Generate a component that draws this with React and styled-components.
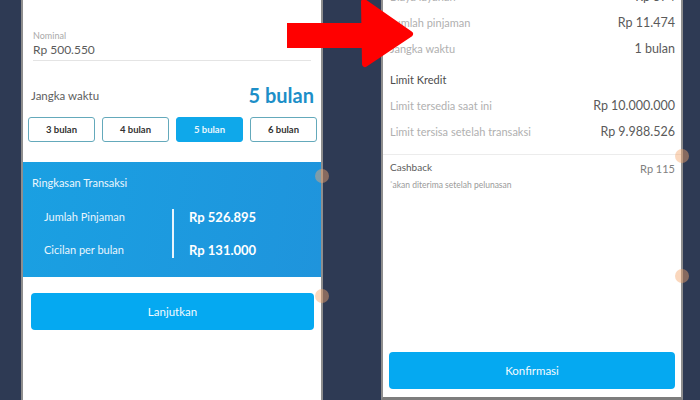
import React from "react";
import styled, { createGlobalStyle } from "styled-components";

const GlobalStyle = createGlobalStyle`
  html, body {
    margin: 0;
    padding: 0;
    background: #2e3a54;
    font-family: "Lato", "Noto Sans", sans-serif;
  }
`;

const Page = styled.div`
  position: relative;
  width: 700px;
  height: 400px;
  overflow: hidden;
  display: flex;
  align-items: flex-start;
  padding-left: 21px;
  gap: 58px;
  box-sizing: border-box;
  background: #2e3a54;
`;

const Phone = styled.div`
  position: relative;
  width: 298px;
  height: ${p => p.h}px;
  background: #ffffff;
  border-left: 2px solid #8e8e8e;
  border-right: 2px solid #8e8e8e;
  border-bottom: ${p => (p.bottomEdge ? "3px solid #7d7d7d" : "none")};
  display: flex;
  flex-direction: column;
  flex-shrink: 0;
`;

const Bubble = styled.div`
  position: absolute;
  right: -8px;
  top: ${p => p.top}px;
  width: 14px;
  height: 14px;
  border-radius: 50%;
  background: #f3a66d;
  opacity: 0.45;
`;

/* left phone */

const Field = styled.div`
  margin: 30px 10px 0 10px;
  border-bottom: 1px solid #e4e4e4;
  padding-bottom: 2px;
  position: relative;
`;

const FieldLabel = styled.div`
  font-size: 9px;
  line-height: 12px;
  color: #a9a9a9;
`;

const FieldValue = styled.div`
  font-size: 12px;
  line-height: 16px;
  color: #5b5b5b;
`;

const TermRow = styled.div`
  margin: 22px 7px 0 8px;
  display: flex;
  align-items: center;
  justify-content: space-between;
  height: 24px;
`;

const TermLabel = styled.span`
  font-size: 11.5px;
  color: #5e5e5e;
`;

const TermValue = styled.span`
  font-size: 20px;
  font-weight: 700;
  color: #1d8fc8;
`;

const Chips = styled.div`
  margin: 10px 4px 0 5px;
  display: grid;
  grid-template-columns: repeat(4, 1fr);
  gap: 7px;
`;

const Chip = styled.div`
  height: 25px;
  box-sizing: border-box;
  border-radius: 3px;
  border: 1px solid ${p => (p.active ? "#0fa8ea" : "#64a9bb")};
  background: ${p => (p.active ? "#0fa8ea" : "#ffffff")};
  color: ${p => (p.active ? "#e8f6fd" : "#333333")};
  font-size: 9.5px;
  font-weight: 700;
  display: flex;
  align-items: center;
  justify-content: center;
`;

const Summary = styled.div`
  margin-top: 20px;
  height: 115px;
  box-sizing: border-box;
  background: linear-gradient(100deg, #1aa0e2 0%, #1f94dc 100%);
  padding: 14px 0 0 9px;
  color: #ffffff;
`;

const SummaryTitle = styled.div`
  font-size: 11px;
  line-height: 14px;
  color: #eaf6fd;
`;

const SummaryGrid = styled.div`
  margin-top: 19px;
  margin-left: 12px;
  display: grid;
  grid-template-columns: 128px 1fr;
`;

const SummaryLabels = styled.div`
  display: flex;
  flex-direction: column;
  gap: 17px;
  font-size: 11px;
  line-height: 16px;
  color: #e9f5fd;
`;

const SummaryValues = styled.div`
  border-left: 2px solid #e8f4fc;
  padding-left: 15px;
  display: flex;
  flex-direction: column;
  gap: 17px;
  font-size: 13px;
  line-height: 16px;
  font-weight: 700;
`;

const PrimaryButton = styled.div`
  margin: ${p => p.m};
  height: 37px;
  border-radius: 4px;
  background: #05a9f1;
  color: #f4fbff;
  font-size: 11.5px;
  display: flex;
  align-items: center;
  justify-content: center;
  flex-shrink: 0;
`;

/* right phone */

const Details = styled.div`
  padding: 0 6px 0 7px;
  margin-top: -17px;
`;

const Row = styled.div`
  display: flex;
  justify-content: space-between;
  align-items: center;
  height: 26px;
`;

const RowLabel = styled.span`
  font-size: 11px;
  color: #b0b0b0;
`;

const RowValue = styled.span`
  font-size: 12.5px;
  color: #5a5a5a;
`;

const SectionTitle = styled.div`
  font-size: 11px;
  color: #4d4d4d;
  margin-top: 5px;
  height: 26px;
  display: flex;
  align-items: center;
`;

const Divider = styled.div`
  margin-top: 10px;
  height: 1px;
  background: #ececec;
`;

const CashbackRow = styled.div`
  padding: 6px 6px 0 7px;
  display: flex;
  justify-content: space-between;
  align-items: flex-start;
`;

const CashLabel = styled.span`
  font-size: 10px;
  color: #5c5c5c;
`;

const CashValue = styled.span`
  font-size: 11px;
  color: #808080;
  margin-top: 1px;
`;

const Note = styled.div`
  padding: 4px 0 0 7px;
  font-size: 8.5px;
  color: #9a9a9a;
  & sup {
    font-size: 6px;
    vertical-align: 3px;
  }
`;

const Arrow = styled.svg`
  position: absolute;
  left: 285px;
  top: 0;
`;

export default function App() {
  return (
    <>
      <GlobalStyle />
      <Page>
        <Phone h={400}>
          <Field>
            <FieldLabel>Nominal</FieldLabel>
            <FieldValue>Rp 500.550</FieldValue>
          </Field>
          <TermRow>
            <TermLabel>Jangka waktu</TermLabel>
            <TermValue>5 bulan</TermValue>
          </TermRow>
          <Chips>
            <Chip>3 bulan</Chip>
            <Chip>4 bulan</Chip>
            <Chip active>5 bulan</Chip>
            <Chip>6 bulan</Chip>
          </Chips>
          <Summary>
            <SummaryTitle>Ringkasan Transaksi</SummaryTitle>
            <SummaryGrid>
              <SummaryLabels>
                <span>Jumlah Pinjaman</span>
                <span>Cicilan per bulan</span>
              </SummaryLabels>
              <SummaryValues>
                <span>Rp 526.895</span>
                <span>Rp 131.000</span>
              </SummaryValues>
            </SummaryGrid>
          </Summary>
          <PrimaryButton m="16px 7px 0 8px">Lanjutkan</PrimaryButton>
          <Bubble top={169} />
          <Bubble top={289} />
        </Phone>

        <Phone h={397} bottomEdge>
          <Details>
            <Row>
              <RowLabel>Biaya layanan</RowLabel>
              <RowValue>Rp 574</RowValue>
            </Row>
            <Row>
              <RowLabel>Jumlah pinjaman</RowLabel>
              <RowValue>Rp 11.474</RowValue>
            </Row>
            <Row>
              <RowLabel>Jangka waktu</RowLabel>
              <RowValue>1 bulan</RowValue>
            </Row>
            <SectionTitle>Limit Kredit</SectionTitle>
            <Row>
              <RowLabel>Limit tersedia saat ini</RowLabel>
              <RowValue>Rp 10.000.000</RowValue>
            </Row>
            <Row>
              <RowLabel>Limit tersisa setelah transaksi</RowLabel>
              <RowValue>Rp 9.988.526</RowValue>
            </Row>
          </Details>
          <Divider />
          <CashbackRow>
            <CashLabel>Cashback</CashLabel>
            <CashValue>Rp 115</CashValue>
          </CashbackRow>
          <Note>
            <sup>*</sup>akan diterima setelah pelunasan
          </Note>
          <PrimaryButton m="auto 6px 8px 6px">Konfirmasi</PrimaryButton>
          <Bubble top={149} />
          <Bubble top={269} />
        </Phone>

        <Arrow width="135" height="72" viewBox="0 0 135 72">
          <rect x="2" y="23" width="80" height="25" fill="#ff0000" />
          <path
            d="M79 2 L125 34 L80 64 Z"
            fill="#ff0000"
            stroke="#ff0000"
            strokeWidth="6"
            strokeLinejoin="round"
          />
        </Arrow>
      </Page>
    </>
  );
}
